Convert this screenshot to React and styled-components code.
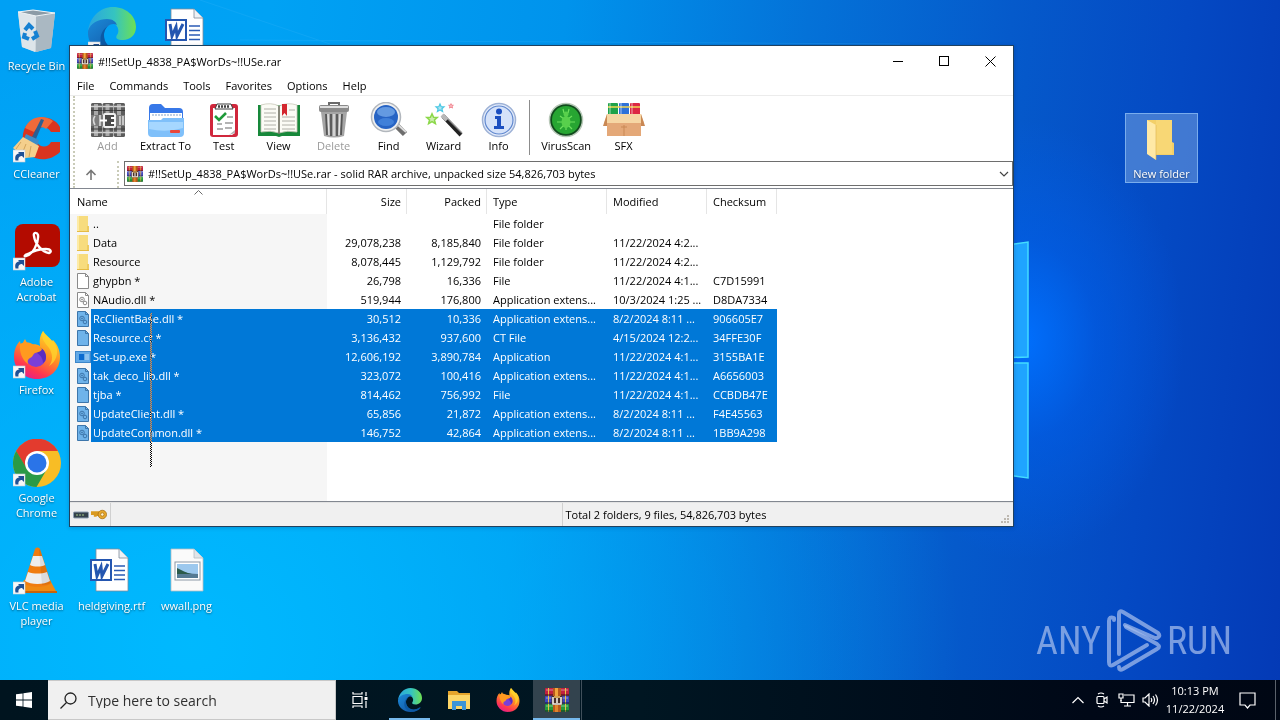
import React from "react";
import styled, { createGlobalStyle, css } from "styled-components";

const GlobalStyle = createGlobalStyle`
  * {
    box-sizing: border-box;
  }
  body {
    margin: 0;
    font-family: "Open Sans", "Noto Sans", sans-serif;
    font-size: 11px;
    line-height: 15px;
    color: #000000;
  }
  button, input {
    font: inherit;
    color: inherit;
    border: 0;
    padding: 0;
    margin: 0;
    background: none;
  }
  svg {
    display: block;
    flex: none;
  }
`;

const Screen = styled.div`
  height: 100vh;
  display: flex;
  flex-direction: column;
  overflow: hidden;
`;

const Desktop = styled.main`
  position: relative;
  flex: 1;
  min-height: 0;
  background:
    radial-gradient(ellipse 160px 220px at 80% 50%, rgba(0, 112, 255, 0.95), rgba(0, 96, 240, 0.5) 45%, rgba(0, 90, 230, 0) 100%),
    radial-gradient(ellipse 60% 90% at 15% 95%, rgba(0, 186, 255, 0.95), rgba(0, 180, 255, 0) 100%),
    linear-gradient(96deg, #00a0f4 0%, #00a2f4 20%, #0093ec 42%, #0472d8 60%, #055acb 75%, #0449c3 88%, #043ab6 100%);
`;

const Wallpaper = styled.svg`
  position: absolute;
  right: 0;
  top: 0;
`;

const IconGrid = styled.div`
  position: relative;
  display: grid;
  grid-template-columns: repeat(auto-fill, 75px);
  grid-auto-rows: 108px;
`;

const Shortcut = styled.button`
  grid-column: ${(props) => props.$col};
  grid-row: ${(props) => props.$row};
  margin: 5px 2px 0 0;
  align-self: start;
  display: flex;
  flex-direction: column;
  align-items: center;
  gap: 3px;
  min-height: 70px;
  padding-top: 1px;
  border: 1px solid transparent;
  color: #ffffff;
  text-shadow: 0 1px 2px rgba(0, 0, 0, 0.5);
  ${(props) =>
    props.$selected &&
    css`
      background: rgba(125, 170, 225, 0.5);
      border-color: rgba(140, 190, 245, 0.75);
    `}
`;

const Watermark = styled.div`
  position: absolute;
  right: 48px;
  bottom: 6px;
  display: flex;
  align-items: center;
  gap: 5px;
  font-family: "Roboto Condensed", "Liberation Sans Narrow", "Liberation Sans", sans-serif;
  font-size: 38px;
  font-weight: 400;
  line-height: 66px;
  color: rgba(160, 185, 235, 0.75);
`;

const Window = styled.section`
  position: absolute;
  left: 69px;
  top: 45px;
  right: 266px;
  bottom: 153px;
  display: flex;
  flex-direction: column;
  background: #ffffff;
  border: 1px solid #20415f;
  box-shadow: 0 1px 4px rgba(0, 20, 60, 0.2);
`;

const TitleBar = styled.header`
  display: flex;
  align-items: center;
  gap: 5px;
  height: 30px;
  padding-left: 7px;
`;

const Title = styled.h1`
  flex: 1;
  margin: 0;
  font-size: 11px;
  font-weight: 400;
`;

const WindowButtons = styled.div`
  display: flex;
`;

const WindowButton = styled.button`
  display: flex;
  align-items: center;
  justify-content: center;
  width: 46px;
  height: 29px;
`;

const MenuBar = styled.nav`
  display: flex;
  gap: 1px;
  height: 20px;
  border-bottom: 1px solid #ececec;
`;

const MenuItem = styled.button`
  padding: 0 7px;
`;

const Rebar = styled.div`
  margin-left: 3px;
  border-left: 2px dotted #c9cbb8;
`;

const Toolbar = styled.div`
  display: flex;
  align-items: flex-start;
  height: 64px;
  padding-left: 5px;
`;

const ToolButton = styled.button`
  display: flex;
  flex-direction: column;
  align-items: center;
  min-width: 55px;
  padding: 6px 5px 0;
  color: ${(props) => (props.disabled ? "#9a9a9a" : "#000000")};
`;

const ToolSeparator = styled.span`
  width: 1px;
  height: 55px;
  margin: 4px 6px 0 3px;
  background: #8c8c8c;
`;

const AddressRow = styled.div`
  display: flex;
  align-items: flex-start;
  height: 28px;
  padding-top: 1px;
`;

const UpButton = styled.button`
  display: flex;
  justify-content: center;
  align-items: center;
  width: 44px;
  height: 27px;
  padding-right: 10px;
  border-right: 2px dotted #c9cbb8;
`;

const AddressBox = styled.label`
  flex: 1;
  display: flex;
  align-items: center;
  gap: 5px;
  height: 25px;
  margin-left: 5px;
  padding: 0 3px 0 2px;
  border: 1px solid #6e6e6e;
`;

const AddressInput = styled.input`
  flex: 1;
  min-width: 0;
  outline: none;
`;

const ListArea = styled.div`
  position: relative;
  flex: 1;
  min-height: 0;
  overflow: hidden;
  border-top: 1px solid #828790;
  border-bottom: 1px solid #828790;
  background: linear-gradient(#f6f6f6, #f6f6f6) 0 25px / 257px 100% no-repeat #ffffff;
`;

const FileTable = styled.table`
  table-layout: fixed;
  width: 707px;
  border-spacing: 0;
`;

const HeadCell = styled.th`
  position: relative;
  height: 25px;
  padding: 0 5px 0 6px;
  border-right: 1px solid #e5e5e5;
  font-weight: 400;
  text-align: ${(props) => (props.$right ? "right" : "left")};

  &:first-child {
    padding-left: 7px;
  }

  svg {
    position: absolute;
    top: 1px;
    left: 50%;
    margin-left: -4px;
  }
`;

const Row = styled.tr`
  color: ${(props) => (props.$selected ? "#ffffff" : "#000000")};

  td:not(:first-child),
  td:first-child span {
    background: ${(props) => (props.$selected ? "#0078d7" : "transparent")};
  }
`;

const Cell = styled.td`
  height: 19px;
  padding: 0 6px;
  white-space: nowrap;
  overflow: hidden;
  text-align: ${(props) => (props.$right ? "right" : "left")};
`;

const NameCell = styled(Cell)`
  padding: 0 0 0 5px;
`;

const FileName = styled.div`
  display: flex;
  align-items: center;

  span {
    flex: 1;
    padding-left: 2px;
    line-height: 19px;
  }
`;

const Marquee = styled.div`
  position: absolute;
  left: 80px;
  top: 124px;
  width: 2px;
  height: 154px;
  background: repeating-conic-gradient(#ffffff 0 25%, transparent 0 50%) 0 0 / 2px 2px;
  mix-blend-mode: difference;
`;

const StatusBar = styled.footer`
  display: flex;
  height: 24px;
  background: #f0f0f0;
  border-top: 1px solid #e3e3e3;
`;

const StatusPane = styled.div`
  flex: ${(props) => (props.$fixed ? "none" : 1)};
  display: flex;
  align-items: center;
  gap: 2px;
  padding: 0 3px;
  border-right: ${(props) => (props.$last ? "0" : "1px solid #d0d0d0")};

  svg:last-child {
    margin-left: ${(props) => (props.$last ? "auto" : "0")};
    align-self: ${(props) => (props.$last ? "flex-end" : "center")};
  }
`;

const Taskbar = styled.footer`
  display: flex;
  height: 40px;
  background: linear-gradient(90deg, #00141f, #001622 50%, #000817 85%, #000714);
  color: #ffffff;
`;

const TaskButton = styled.button`
  display: flex;
  align-items: center;
  justify-content: center;
  width: ${(props) => props.$width || 49}px;
  height: 40px;
`;

const Apps = styled.nav`
  display: flex;
  padding-left: 1px;
`;

const AppButton = styled(TaskButton)`
  border-bottom: 2px solid ${(props) => (props.$running ? "#76b9ed" : "transparent")};
  padding-top: 2px;
  width: ${(props) => (props.$running ? 41 : 49)}px;
  margin: 0 ${(props) => (props.$running ? 4 : 0)}px;
  ${(props) =>
    props.$active &&
    css`
      width: 47px;
      margin: 0 1px;
      background: #33434e;
      box-shadow: 1px 0 0 #001622, 2px 0 0 #40505b;
    `}
`;

const SearchBox = styled.label`
  display: flex;
  align-items: center;
  gap: 11px;
  width: 288px;
  padding-left: 12px;
  background: #f0f0f0;
  border: 1px solid #c8c8c8;
  border-left: 0;
  color: #303030;
`;

const SearchInput = styled.input`
  flex: 1;
  min-width: 0;
  font-size: 14px;
  outline: none;

  &::placeholder {
    color: #303030;
    opacity: 1;
  }
`;

const Tray = styled.div`
  display: flex;
  align-items: center;
  gap: 6px;
  margin-left: auto;
  padding-right: 12px;
`;

const TrayButton = styled.button`
  display: flex;
  justify-content: center;
  width: 18px;
`;

const Clock = styled.time`
  width: 60px;
  text-align: center;
  line-height: 18px;
  white-space: nowrap;
`;

const ShowDesktop = styled.button`
  width: 5px;
  border-left: 1px solid #5b626b;
`;

const Books = ({ size }) => (
  <svg width={size} height={size} viewBox="0 0 24 24">
    {["#c0213f", "#4048c0", "#259a3c"].map((fill, i) => (
      <g key={fill}>
        <rect x="0" y={i * 8} width="24" height="7.600" rx="1" fill={fill} />
        <rect x="1" y={i * 8 + 1} width="22" height="2" fill="#ffffff" opacity=".22" />
        <path d={`M3.500 ${i * 8}v7.600M20.500 ${i * 8}v7.600`} stroke="#e8c34a" strokeWidth="1" />
        <rect x="0" y={i * 8 + 6} width="24" height="1.600" fill="#000000" opacity=".35" />
      </g>
    ))}
    <rect x="8" y="0" width="8" height="24" fill="#b9591b" />
    <rect x="10" y="0" width="3" height="8" fill="#f0a53c" />
    <rect x="10" y="17" width="3" height="7" fill="#e0852c" />
    <rect x="6.500" y="8" width="11" height="9" rx="1" fill="#4a2f28" />
    <path d="M8 9v7h8V9M12 10v5" fill="none" stroke="#f4efe6" strokeWidth="1.600" />
    <path d="M9 9h6" stroke="#f0c060" strokeWidth="1.600" />
  </svg>
);

const EdgeArt = ({ size }) => (
  <svg width={size} height={size} viewBox="0 0 48 48">
    <defs>
      <linearGradient id="edgeTop" x1="0" y1=".4" x2="1" y2=".4">
        <stop offset="0" stopColor="#2aa5e0" />
        <stop offset=".55" stopColor="#35c4c0" />
        <stop offset="1" stopColor="#6ee052" />
      </linearGradient>
      <linearGradient id="edgeLow" x1="0" y1="0" x2="1" y2="1">
        <stop offset="0" stopColor="#1b8ad8" />
        <stop offset="1" stopColor="#114a9a" />
      </linearGradient>
    </defs>
    <path d="M0 24C2 10 12 0 25 0c13 0 23 9 23 20 0 8-6 13-13 13-6 0-8-2-6-5 3-4 1-11-6-13-9-2-20 2-23 9z" fill="url(#edgeTop)" />
    <path d="M0 24c2-8 11-12 19-12 6 0 9 3 10 6-5-3-13 1-13 10 0 10 9 17 19 15 4 0 7-2 9-4-4 6-11 9-19 9C11 48-1 38 0 24z" fill="url(#edgeLow)" />
    <path d="M22 18c-6 3-8 11-4 18 5 8 16 9 25 3 2-1 3 0 1 2-7 8-20 8-27 2-7-7-6-20 5-25z" fill="#0c59a4" />
  </svg>
);

const FirefoxArt = ({ size }) => (
  <svg width={size} height={size} viewBox="0 0 48 48">
    <defs>
      <linearGradient id="foxBody" x1=".8" y1="0" x2=".3" y2="1">
        <stop offset="0" stopColor="#ffe32b" />
        <stop offset=".45" stopColor="#ff9122" />
        <stop offset=".8" stopColor="#ff3750" />
        <stop offset="1" stopColor="#e51e8a" />
      </linearGradient>
    </defs>
    <path d="M30 0c2 4 6 6 9 10l1-1c5 5 7 11 7 17 0 13-10 22-23 22S1 38 1 26c0-7 2-12 6-16l1 5 4-7 3 6c5-1 9-1 12 1-1-6 0-11 3-15z" fill="url(#foxBody)" />
    <circle cx="23" cy="26" r="10" fill="#7a3fd8" />
    <path d="M23 16c6 0 10 4 10 10 0 3-1 5-3 6 0-6-5-11-11-12-2-3 1-4 4-4z" fill="#5a2cc0" />
    <path d="M7 13c5-3 11-2 15 2 4 0 6 1 7 3-1 3-4 3-7 4-2 1-2 4-5 5-2 1-3 3-2 6C9 29 6 20 7 13z" fill="#ff9a1f" />
    <path d="M30 0c-3 7 2 12 6 17 4 6 4 13 0 18 7-4 10-13 7-20-2-5-8-8-13-15z" fill="#ffd52e" opacity=".75" />
  </svg>
);

const Badge = () => (
  <g>
    <rect x="0" y="35" width="12" height="12" fill="#f7f7f7" stroke="#c2cdd8" strokeWidth=".6" />
    <path d="M2.500 45.500c-1-5 1-7 4-7L5 37h6v6l-2-2c-2 0-4 1-3.500 4.500z" fill="#1f5196" />
  </g>
);

const DesktopSvg = ({ children, badge }) => (
  <svg width="48" height="48" viewBox="0 0 48 48">
    {children}
    {badge && <Badge />}
  </svg>
);

const RecycleArt = () => (
  <DesktopSvg>
    <path d="M5 5l15-2 22 3-4 35-15 4-14-5z" fill="#c9d3da" />
    <path d="M5 5l18 3-1 37-13-5z" fill="#dde5ea" />
    <path d="M23 8l19-2-4 35-15 4z" fill="#aab8c2" />
    <path d="M5 5l15-2 22 3-19 3z" fill="#8b9ba6" stroke="#eef3f6" strokeWidth="1" />
    <g fill="none" stroke="#1581d2" strokeWidth="4">
      <path d="M12 23l4-5 4 4M22 24l2 5-5 3M16 32l-5-2 1-4" />
    </g>
  </DesktopSvg>
);

const CCleanerArt = () => (
  <DesktopSvg badge>
    <path d="M47 12C40-1 17-1 11 15c-3 9-1 19 6 25 9 7 22 5 30-3V27h-9c-3 6-11 6-14 0-3-7 0-14 6-15 4 0 6 2 8 5h9z" fill="#d9341f" />
    <path d="M40 6C31-1 17 1 12 13l9 4c3-6 9-6 12-3z" fill="#f06a3a" />
    <path d="M28 4l3 1-8 19-4-2z" fill="#2b5f92" />
    <path d="M13 19l13 6-2 7-14-6z" fill="#3d8cc8" />
    <path d="M10 22l16 9-4 11-10 1L0 33z" fill="#f4cf8c" />
    <path d="M8 27l-5 7M13 29l-4 10M18 31l-2 11" stroke="#d2a55c" strokeWidth="1" />
  </DesktopSvg>
);

const AcrobatArt = () => (
  <DesktopSvg badge>
    <rect x="2" y="1" width="45" height="43" rx="8" fill="#b30b00" />
    <path d="M13 33c6-1 13-12 12-21-1-3-5-3-4 1 1 8 8 16 15 17 3-1 2-4-3-4-8 0-13 2-18 5-4 1-4 3-2 2z" fill="none" stroke="#ffffff" strokeWidth="2.400" />
  </DesktopSvg>
);

const ChromeArt = () => (
  <DesktopSvg badge>
    <circle cx="24" cy="24" r="24" fill="#f8bd25" />
    <path d="M24 12h21A24 24 0 0 0 3 12l10.600 18L24 24z" fill="#e33b2e" />
    <path d="M3.200 12A24 24 0 0 0 23.500 48L34 30H14z" fill="#2a9a47" />
    <circle cx="24" cy="24" r="12" fill="#ffffff" />
    <circle cx="24" cy="24" r="9.500" fill="#2a74e8" />
  </DesktopSvg>
);

const VlcArt = () => (
  <DesktopSvg badge>
    <path d="M11 33h26l7 13H5z" fill="#f08a12" />
    <path d="M5 44h39v2H5z" fill="#c8640a" />
    <path d="M22 2c1-2 4-2 5 0l11 34c-3 5-24 5-27 0z" fill="#f07c10" />
    <path d="M20 9l9 0 3 9c-4 2-11 2-15 0zM15 25c6 2 13 2 19 0l3 9c-6 4-19 4-25 0z" fill="#eeeeee" />
    <path d="M26 3l3 35c4 0 7-1 9-2L27 2z" fill="#000000" opacity=".08" />
  </DesktopSvg>
);

const WordArt = () => (
  <DesktopSvg>
    <path d="M8 2h23l9 9v33H8z" fill="#ffffff" stroke="#7f8c99" strokeWidth=".8" />
    <path d="M31 2v9h9" fill="#eef2f6" stroke="#7f8c99" strokeWidth=".8" />
    <path d="M26 19h11M26 23.500h11M26 28h11M26 32.500h11" stroke="#2b5bb5" strokeWidth="1.400" />
    <rect x="3" y="13" width="20" height="20" fill="#ffffff" stroke="#2456b0" strokeWidth="2" />
    <path d="M7 17l2 12 4-9 1 9 6-12" fill="none" stroke="#2456b0" strokeWidth="3" />
  </DesktopSvg>
);

const PictureArt = () => (
  <DesktopSvg>
    <path d="M8 2h23l9 9v33H8z" fill="#fafafa" stroke="#b5bcc2" strokeWidth=".8" />
    <path d="M31 2v9h9" fill="#e0e4e8" stroke="#b5bcc2" strokeWidth=".8" />
    <rect x="12" y="15" width="25" height="18" fill="#ffffff" stroke="#8b98a5" strokeWidth="1" />
    <rect x="14" y="17" width="21" height="14" fill="#9cc8ee" />
    <path d="M14 24c6 0 9 3 21 3v4H14z" fill="#557a93" />
    <path d="M14 21c5 2 9 5 15 6H14z" fill="#2b5a4a" />
  </DesktopSvg>
);

const FolderArt = () => (
  <DesktopSvg>
    <path d="M9 5h25v22l2 1v12H15z" fill="#f3cf68" />
    <path d="M18 5h16v34H18z" fill="#f8d775" />
    <path d="M9 5l9 5v35l-9-6z" fill="#ffe9a6" />
    <path d="M18 10v35" stroke="#dcb44e" strokeWidth=".6" />
  </DesktopSvg>
);

const ToolSvg = ({ children }) => (
  <svg width="42" height="36" viewBox="0 0 42 36">
    {children}
  </svg>
);

const AddArt = () => (
  <ToolSvg>
    {[4, 15.5, 27].map((x) => (
      <g key={x}>
        <rect x={x} y="1" width="11" height="34" rx="1.500" fill="#5c5c5c" />
        <rect x={x + 3} y="2" width="4" height="32" fill="#a8a8a8" />
        <path d={`M${x} 4.500h11M${x} 30.500h11`} stroke="#d0d0d0" strokeWidth="1.500" />
        <path d={`M${x} 8.500h11M${x} 27h11`} stroke="#3c3c3c" strokeWidth="1" />
      </g>
    ))}
    <rect x="4" y="13" width="34" height="11" fill="#7d7d7d" />
    <path d="M8 14q-3 4 0 9M13 13v11M33 14v9M36 14v9" fill="none" stroke="#d8d8d8" strokeWidth="1.600" />
    <rect x="17" y="12" width="11" height="13" rx="1" fill="#4a4a4a" stroke="#eeeeee" strokeWidth="2" />
    <path d="M13 18.500h7M28 16h-4M28 21h-4" stroke="#ffffff" strokeWidth="2" />
  </ToolSvg>
);

const ExtractArt = () => (
  <ToolSvg>
    <path d="M4 6q0-4 4-4h8l4 4h14q4 0 4 4v20H4z" fill="#3778e8" />
    <path d="M5 11h32v14H5z" fill="#ffffff" />
    <path d="M7 13h29" stroke="#c2d1e2" strokeWidth="2" strokeDasharray="2 1" />
    <path d="M3 18h13l2-2h21v15q0 4-4 4H7q-4 0-4-4z" fill="#7fc0fa" />
    <path d="M4 20h34v6q-17 5-34 1z" fill="#a6d7ff" />
    <rect x="25" y="28" width="10" height="3" rx="1" fill="#e8453a" />
  </ToolSvg>
);

const TestArt = () => (
  <ToolSvg>
    <rect x="7" y="2" width="28" height="33" rx="3" fill="#d0273c" />
    <path d="M10 6h22v25l-3 2H10z" fill="#ffffff" />
    <path d="M12 7h18l-2-5H14z" fill="#ffffff" stroke="#404040" strokeWidth="1" />
    <path d="M15 4.500h12" stroke="#404040" strokeWidth="2.500" strokeDasharray="2 1" />
    <path d="M12 14l4 4 7-7" fill="none" stroke="#1f9a3a" strokeWidth="2.600" />
    <path d="M24 15h6M14 22h5M22 21h8M14 27h6M22 26h7" stroke="#9a9a9a" strokeWidth="1.500" />
    <path d="M26 33l6-5v3z" fill="#b5b5b5" />
  </ToolSvg>
);

const ViewArt = () => (
  <ToolSvg>
    <path d="M0 3h42v31H24l-3 1-3-1H0z" fill="#17883a" />
    <path d="M3 3q10-3 18 1v27q-8-3-18-1zM39 3q-10-3-18 1v27q8-3 18-1z" fill="#fbfbf5" stroke="#c8c8b8" strokeWidth=".8" />
    <path d="M21 4v28" stroke="#6e6e60" strokeWidth="1.500" />
    <path d="M6 7h12M6 11h12M6 15h12M6 19h12M6 23h12M6 27h12M31 8h6M24 15h13M24 19h13M24 23h13M24 27h13" stroke="#b0b0a8" strokeWidth="1" />
    <path d="M24 2h5v12l-2.500-3-2.500 3z" fill="#d3272f" />
  </ToolSvg>
);

const DeleteArt = () => (
  <ToolSvg>
    <path d="M8 10h26l-3 24q-10 3-20 0z" fill="#a5a5a5" />
    <path d="M13 12l1 21M18 12v22M24 12v22M29 12l-1 21" stroke="#555555" strokeWidth="1.800" />
    <path d="M15 12l1 21M21 12v22M27 12l-1 21" stroke="#e6e6e6" strokeWidth="1.400" />
    <rect x="6" y="3" width="30" height="7" rx="2" fill="#8a8a8a" />
    <rect x="7" y="4" width="28" height="2" fill="#dddddd" />
    <path d="M16 3V1h10v2" fill="none" stroke="#6a6a6a" strokeWidth="2" />
  </ToolSvg>
);

const FindArt = () => (
  <ToolSvg>
    <path d="M28 23l9 9" stroke="#6e6e6e" strokeWidth="6" />
    <path d="M29 22l9 8" stroke="#dddddd" strokeWidth="2" />
    <circle cx="18" cy="15" r="14.500" fill="#f0f0f0" stroke="#b2b7bd" strokeWidth="1.500" />
    <circle cx="18" cy="15" r="12" fill="#2764c4" />
    <ellipse cx="18" cy="10" rx="9" ry="5" fill="#7fb0ee" opacity=".7" />
    <ellipse cx="18" cy="20" rx="8" ry="4" fill="#4b8be2" opacity=".7" />
  </ToolSvg>
);

const Star = ({ x, y, r, color }) => (
  <path
    d="M0-4L1.200-1.300 4-1.200 1.900 .7 2.600 3.500 0 2-2.600 3.500-1.900 .7-4-1.200-1.200-1.300z"
    transform={`translate(${x} ${y}) scale(${r})`}
    fill={color}
    fillOpacity=".45"
    stroke={color}
    strokeWidth="1.200"
  />
);

const WizardArt = () => (
  <ToolSvg>
    <path d="M20 14l18 19" stroke="#222222" strokeWidth="4" />
    <path d="M21 13l18 18" stroke="#8f8f8f" strokeWidth="1.200" />
    <path d="M19 13l5 5" stroke="#b8b8b8" strokeWidth="4" />
    <Star x={9} y={17} r={1.3} color="#8cd84a" />
    <Star x={17} y={6} r={1} color="#4cc8e4" />
    <Star x={28} y={4} r={0.6} color="#f0707c" />
  </ToolSvg>
);

const InfoArt = () => (
  <ToolSvg>
    <circle cx="21" cy="18" r="16.500" fill="#e4ecfb" stroke="#9eb2d6" strokeWidth="1.500" />
    <circle cx="21" cy="18" r="14" fill="#d5e2f9" stroke="#5f87ce" strokeWidth="1.200" />
    <circle cx="21" cy="9.500" r="3" fill="#1c4fc0" />
    <path d="M17 14h6v10h3v3H16v-3h3v-7h-2z" fill="#1c4fc0" />
  </ToolSvg>
);

const VirusArt = () => (
  <ToolSvg>
    <circle cx="21" cy="18" r="16.500" fill="#114a1d" stroke="#b8c8b8" strokeWidth="1.500" />
    <circle cx="21" cy="18" r="14" fill="#27a532" />
    <g fill="none" stroke="#6fe05e" strokeWidth="1.200">
      <path d="M21 10v18M15 14l4 3M27 14l-4 3M12 20h6M30 20h-6M15 27l4-4M27 27l-4-4M18 7l1 4M24 7l-1 4" />
    </g>
    <ellipse cx="21" cy="20" rx="4.500" ry="6" fill="#58d04c" />
    <circle cx="21" cy="12" r="2.500" fill="#58d04c" />
  </ToolSvg>
);

const SfxArt = () => (
  <ToolSvg>
    <rect x="5" y="1" width="10" height="16" rx="1" fill="#1fa24a" />
    <rect x="16" y="1" width="10" height="16" rx="1" fill="#2f72d8" />
    <rect x="27" y="1" width="10" height="16" rx="1" fill="#dc2844" />
    <path d="M5 5h32" stroke="#f2d650" strokeWidth="1.500" />
    <path d="M7 1v14M18 1v14M29 1v14" stroke="#ffffff" strokeWidth="2" opacity=".3" />
    <path d="M4 16h34v18H4z" fill="#e4a878" />
    <path d="M4 12h34l3 9H1z" fill="#f6d6a4" />
    <path d="M4 12L1 21l-1 3h4zM38 12l3 9 1 3h-4z" fill="#c98854" />
    <path d="M18 25h6M21 23v11" stroke="#c98854" strokeWidth="1" />
  </ToolSvg>
);

const FileArt = ({ kind, selected }) => {
  const line = selected ? "#3d76ab" : "#8a8a8a";
  const fill = selected ? "#6fb3ea" : "#ffffff";
  if (kind === "folder") {
    return (
      <svg width="16" height="16" viewBox="0 0 16 16">
        <path d="M2 0h11v10l1 0v6H2z" fill="#f7dc7e" />
        <path d="M13 10v6M2 15.500h12" stroke="#e5bb45" strokeWidth="1" />
        <path d="M3 0v15" stroke="#fff0b5" strokeWidth="1.500" />
      </svg>
    );
  }
  if (kind === "exe") {
    return (
      <svg width="16" height="16" viewBox="0 0 16 16">
        <rect x=".5" y="2.500" width="15" height="11" fill="#62a9e6" stroke="#3d86c9" />
        <rect x="4" y="5" width="5" height="6" fill="#0b6bd0" />
        <path d="M10 6h4M10 8h4M10 10h4" stroke="#b9dcf8" />
      </svg>
    );
  }
  return (
    <svg width="16" height="16" viewBox="0 0 16 16">
      <path d="M2.500 .5h8l3 3v12h-11z" fill={fill} stroke={line} />
      <path d="M10.500 .5v3h3" fill="none" stroke={line} />
      {kind === "dll" && (
        <g fill="none" stroke={line} strokeWidth="1">
          <circle cx="7" cy="7.500" r="2.300" />
          <circle cx="7" cy="7.500" r=".6" />
          <circle cx="10" cy="11" r="1.800" />
        </g>
      )}
    </svg>
  );
};

const shortcuts = [
  { name: "Recycle Bin", col: 1, row: 1, art: <RecycleArt /> },
  { name: "CCleaner", col: 1, row: 2, art: <CCleanerArt /> },
  { name: "Adobe Acrobat", col: 1, row: 3, art: <AcrobatArt /> },
  { name: "Firefox", col: 1, row: 4, art: <DesktopSvg badge><FirefoxArt size={48} /></DesktopSvg> },
  { name: "Google Chrome", col: 1, row: 5, art: <ChromeArt /> },
  { name: "VLC media player", col: 1, row: 6, art: <VlcArt /> },
  { name: "Microsoft Edge", col: 2, row: 1, art: <DesktopSvg badge><EdgeArt size={48} /></DesktopSvg>, iconOnly: true },
  { name: "heldgiving.rtf", col: 2, row: 6, art: <WordArt /> },
  { name: "Document", col: 3, row: 1, art: <WordArt />, iconOnly: true },
  { name: "wwall.png", col: 3, row: 6, art: <PictureArt /> },
  { name: "New folder", col: 16, row: 2, art: <FolderArt />, selected: true },
];

const tools = [
  { name: "Add", art: <AddArt />, disabled: true },
  { name: "Extract To", art: <ExtractArt /> },
  { name: "Test", art: <TestArt /> },
  { name: "View", art: <ViewArt /> },
  { name: "Delete", art: <DeleteArt />, disabled: true },
  { name: "Find", art: <FindArt /> },
  { name: "Wizard", art: <WizardArt /> },
  { name: "Info", art: <InfoArt /> },
];

const extraTools = [
  { name: "VirusScan", art: <VirusArt /> },
  { name: "SFX", art: <SfxArt /> },
];

const files = [
  ["folder", "..", "", "", "File folder", "", ""],
  ["folder", "Data", "29,078,238", "8,185,840", "File folder", "11/22/2024 4:2...", ""],
  ["folder", "Resource", "8,078,445", "1,129,792", "File folder", "11/22/2024 4:2...", ""],
  ["file", "ghypbn *", "26,798", "16,336", "File", "11/22/2024 4:1...", "C7D15991"],
  ["dll", "NAudio.dll *", "519,944", "176,800", "Application extens...", "10/3/2024 1:25 ...", "D8DA7334"],
  ["dll", "RcClientBase.dll *", "30,512", "10,336", "Application extens...", "8/2/2024 8:11 ...", "906605E7"],
  ["file", "Resource.ct *", "3,136,432", "937,600", "CT File", "4/15/2024 12:2...", "34FFE30F"],
  ["exe", "Set-up.exe *", "12,606,192", "3,890,784", "Application", "11/22/2024 4:1...", "3155BA1E"],
  ["dll", "tak_deco_lib.dll *", "323,072", "100,416", "Application extens...", "11/22/2024 4:1...", "A6656003"],
  ["file", "tjba *", "814,462", "756,992", "File", "11/22/2024 4:1...", "CCBDB47E"],
  ["dll", "UpdateClient.dll *", "65,856", "21,872", "Application extens...", "8/2/2024 8:11 ...", "F4E45563"],
  ["dll", "UpdateCommon.dll *", "146,752", "42,864", "Application extens...", "8/2/2024 8:11 ...", "1BB9A298"],
];

const FIRST_SELECTED = 5;

function ToolItem({ tool }) {
  return (
    <ToolButton disabled={tool.disabled}>
      {tool.art}
      {tool.name}
    </ToolButton>
  );
}

function FileList() {
  return (
    <ListArea>
      <FileTable>
        <colgroup>
          <col width="257" />
          <col width="80" />
          <col width="80" />
          <col width="120" />
          <col width="100" />
          <col width="70" />
        </colgroup>
        <thead>
          <tr>
            <HeadCell>
              Name
              <svg width="9" height="5" viewBox="0 0 9 5">
                <path d="M.5 4.500l4-4 4 4" fill="none" stroke="#6a6a6a" />
              </svg>
            </HeadCell>
            <HeadCell $right>Size</HeadCell>
            <HeadCell $right>Packed</HeadCell>
            <HeadCell>Type</HeadCell>
            <HeadCell>Modified</HeadCell>
            <HeadCell>Checksum</HeadCell>
          </tr>
        </thead>
        <tbody>
          {files.map(([kind, name, size, packed, type, modified, sum], i) => (
            <Row key={name} $selected={i >= FIRST_SELECTED}>
              <NameCell>
                <FileName>
                  <FileArt kind={kind} selected={i >= FIRST_SELECTED} />
                  <span>{name}</span>
                </FileName>
              </NameCell>
              <Cell $right>{size}</Cell>
              <Cell $right>{packed}</Cell>
              <Cell>{type}</Cell>
              <Cell>{modified}</Cell>
              <Cell>{sum}</Cell>
            </Row>
          ))}
        </tbody>
      </FileTable>
      <Marquee />
    </ListArea>
  );
}

function ArchiveWindow() {
  return (
    <Window>
      <TitleBar>
        <Books size={16} />
        <Title>#!!SetUp_4838_PA$WorDs~!!USe.rar</Title>
        <WindowButtons>
          <WindowButton aria-label="Minimize">
            <svg width="11" height="11"><path d="M0 5.500h10" stroke="#000000" /></svg>
          </WindowButton>
          <WindowButton aria-label="Maximize">
            <svg width="11" height="11"><rect x=".5" y=".5" width="9" height="9" fill="none" stroke="#000000" /></svg>
          </WindowButton>
          <WindowButton aria-label="Close">
            <svg width="11" height="11"><path d="M.5 .5l10 10M10.500 .5l-10 10" stroke="#000000" /></svg>
          </WindowButton>
        </WindowButtons>
      </TitleBar>
      <MenuBar>
        {["File", "Commands", "Tools", "Favorites", "Options", "Help"].map((item) => (
          <MenuItem key={item}>{item}</MenuItem>
        ))}
      </MenuBar>
      <Rebar>
        <Toolbar>
          {tools.map((tool) => (
            <ToolItem key={tool.name} tool={tool} />
          ))}
          <ToolSeparator />
          {extraTools.map((tool) => (
            <ToolItem key={tool.name} tool={tool} />
          ))}
        </Toolbar>
        <AddressRow>
          <UpButton aria-label="Up one level">
            <svg width="12" height="12" viewBox="0 0 12 12">
              <path d="M6 11V1.500M1.500 6L6 1.500 10.500 6" fill="none" stroke="#777777" strokeWidth="1.600" />
            </svg>
          </UpButton>
          <AddressBox>
            <Books size={16} />
            <AddressInput
              aria-label="Archive path"
              defaultValue="#!!SetUp_4838_PA$WorDs~!!USe.rar - solid RAR archive, unpacked size 54,826,703 bytes"
            />
            <svg width="10" height="6" viewBox="0 0 10 6">
              <path d="M1 1l4 4 4-4" fill="none" stroke="#444444" strokeWidth="1.200" />
            </svg>
          </AddressBox>
        </AddressRow>
      </Rebar>
      <FileList />
      <StatusBar>
        <StatusPane $fixed>
          <svg width="16" height="8" viewBox="0 0 16 8">
            <rect x=".5" y="1" width="15" height="6" rx="1" fill="#34424c" stroke="#8fa0b4" />
            <path d="M3 4h9" stroke="#7f9a72" strokeWidth="1.500" strokeDasharray="2 1" />
          </svg>
          <svg width="16" height="11" viewBox="0 0 17 11">
            <path d="M0 2h9v5H6v1H3V6H0z" fill="#d99a20" />
            <circle cx="12" cy="5.500" r="4.500" fill="#e8a92c" stroke="#a56c10" strokeWidth=".8" />
            <circle cx="12" cy="5.500" r="1.800" fill="#fff3cf" stroke="#a56c10" strokeWidth=".8" />
          </svg>
        </StatusPane>
        <StatusPane />
        <StatusPane $last>
          Total 2 folders, 9 files, 54,826,703 bytes
          <svg width="10" height="12" viewBox="0 0 10 12">
            <path d="M7 1h2v2H7zM4 4h2v2H4zM7 4h2v2H7zM1 7h2v2H1zM4 7h2v2H4zM7 7h2v2H7z" fill="#bdb8b0" />
          </svg>
        </StatusPane>
      </StatusBar>
    </Window>
  );
}

function App() {
  return (
    <>
      <GlobalStyle />
      <Screen>
        <Desktop>
          <Wallpaper width="1280" height="680" viewBox="0 0 1280 680">
            <path d="M200 0L330 44M240 40L900 44" stroke="#38b4f8" opacity=".25" />
            <path d="M1000 246L1028 242V357L1000 358zM1000 363L1028 363V478L1000 474z" fill="#1fa4ff" stroke="#43dcff" strokeWidth="1.500" />
          </Wallpaper>
          <IconGrid>
            {shortcuts.map((item) => (
              <Shortcut
                key={item.name}
                $col={item.col}
                $row={item.row}
                $selected={item.selected}
                aria-label={item.name}
              >
                {item.art}
                {!item.iconOnly && item.name}
              </Shortcut>
            ))}
          </IconGrid>
          <Watermark>
            ANY
            <svg width="56" height="64" viewBox="0 0 56 64" fill="none" stroke="currentColor" strokeWidth="4" strokeLinejoin="round" strokeLinecap="round">
              <path d="M8 11V9Q3 7 3 12V53Q3 58 7 56L41 36" />
              <path d="M13 45V5Q13 1 17 3L52 24Q55 27 51 29L49 29L19 16" />
              <path d="M20 18L51 35Q55 38 51 40L17 60Q13 62 13 58" />
            </svg>
            RUN
          </Watermark>
          <ArchiveWindow />
        </Desktop>
        <Taskbar>
          <TaskButton $width={48} aria-label="Start">
            <svg width="16" height="16" viewBox="0 0 16 16">
              <path d="M0 2.300L6.600 1.400V7.600H0zM7.400 1.300L16 0v7.600H7.400zM0 8.400h6.600v6.200L0 13.700zM7.400 8.400H16V16l-8.600-1.300z" fill="#ffffff" />
            </svg>
          </TaskButton>
          <SearchBox>
            <svg width="17" height="17" viewBox="0 0 17 17">
              <circle cx="10.500" cy="6.500" r="5.500" fill="none" stroke="#222222" strokeWidth="1.300" />
              <path d="M6.500 10.500L.5 16.500" stroke="#222222" strokeWidth="1.300" />
            </svg>
            <SearchInput aria-label="Search" placeholder="Type here to search" />
          </SearchBox>
          <TaskButton $width={48} aria-label="Task View">
            <svg width="18" height="18" viewBox="0 0 18 18" fill="none" stroke="#ffffff" strokeWidth="1.200">
              <path d="M2 1v2h9V1M2 17v-2h9v2M2 5.500h9v7H2zM15 1v4M15 10v7" />
              <path d="M15 6v3" strokeWidth="3" />
            </svg>
          </TaskButton>
          <Apps>
            <AppButton $running aria-label="Microsoft Edge"><EdgeArt size={24} /></AppButton>
            <AppButton aria-label="File Explorer">
              <svg width="24" height="24" viewBox="0 0 24 24">
                <path d="M1 3h9l2 2h11v16H1z" fill="#e5a52c" />
                <path d="M1 7h22v14H1z" fill="#fcd667" />
                <path d="M5 13h14v9h-4v-4H9v4H5z" fill="#3b94d6" />
              </svg>
            </AppButton>
            <AppButton aria-label="Firefox"><FirefoxArt size={24} /></AppButton>
            <AppButton $running $active aria-label="WinRAR"><Books size={24} /></AppButton>
          </Apps>
          <Tray>
            <TrayButton aria-label="Show hidden icons">
              <svg width="12" height="8" viewBox="0 0 12 8"><path d="M.5 7L6 1.500 11.500 7" fill="none" stroke="#ffffff" strokeWidth="1.200" /></svg>
            </TrayButton>
            <TrayButton aria-label="Meet Now">
              <svg width="12" height="16" viewBox="0 0 12 16" fill="none" stroke="#ffffff" strokeWidth="1.200">
                <rect x="1" y="4.500" width="7" height="7" rx="1" />
                <path d="M8 7l3-2v6l-3-2M2 2q3-2 6 0M2 14q3 2 6 0" />
              </svg>
            </TrayButton>
            <TrayButton aria-label="Network">
              <svg width="17" height="14" viewBox="0 0 17 14" fill="none" stroke="#ffffff" strokeWidth="1.200">
                <path d="M6 2h10v7.500H3V7M9.500 9.500V13M6 13h7" />
                <path d="M1 1h4v4H1zM3 5v3" />
              </svg>
            </TrayButton>
            <TrayButton aria-label="Volume">
              <svg width="17" height="14" viewBox="0 0 17 14" fill="none" stroke="#ffffff" strokeWidth="1.200">
                <path d="M1 5h2l4-4v12L3 9H1zM9 5q1.500 2 0 4M11 3q3 4 0 8M13.500 1.500q4 5.500 0 11" />
              </svg>
            </TrayButton>
            <Clock>
              10:13 PM
              <br />
              11/22/2024
            </Clock>
            <TaskButton $width={32} aria-label="Notifications">
              <svg width="17" height="17" viewBox="0 0 17 17">
                <path d="M1 1h15v12h-5l-2.500 3L6 13H1z" fill="none" stroke="#ffffff" strokeWidth="1.200" />
              </svg>
            </TaskButton>
          </Tray>
          <ShowDesktop aria-label="Show desktop" />
        </Taskbar>
      </Screen>
    </>
  );
}

export default App;
